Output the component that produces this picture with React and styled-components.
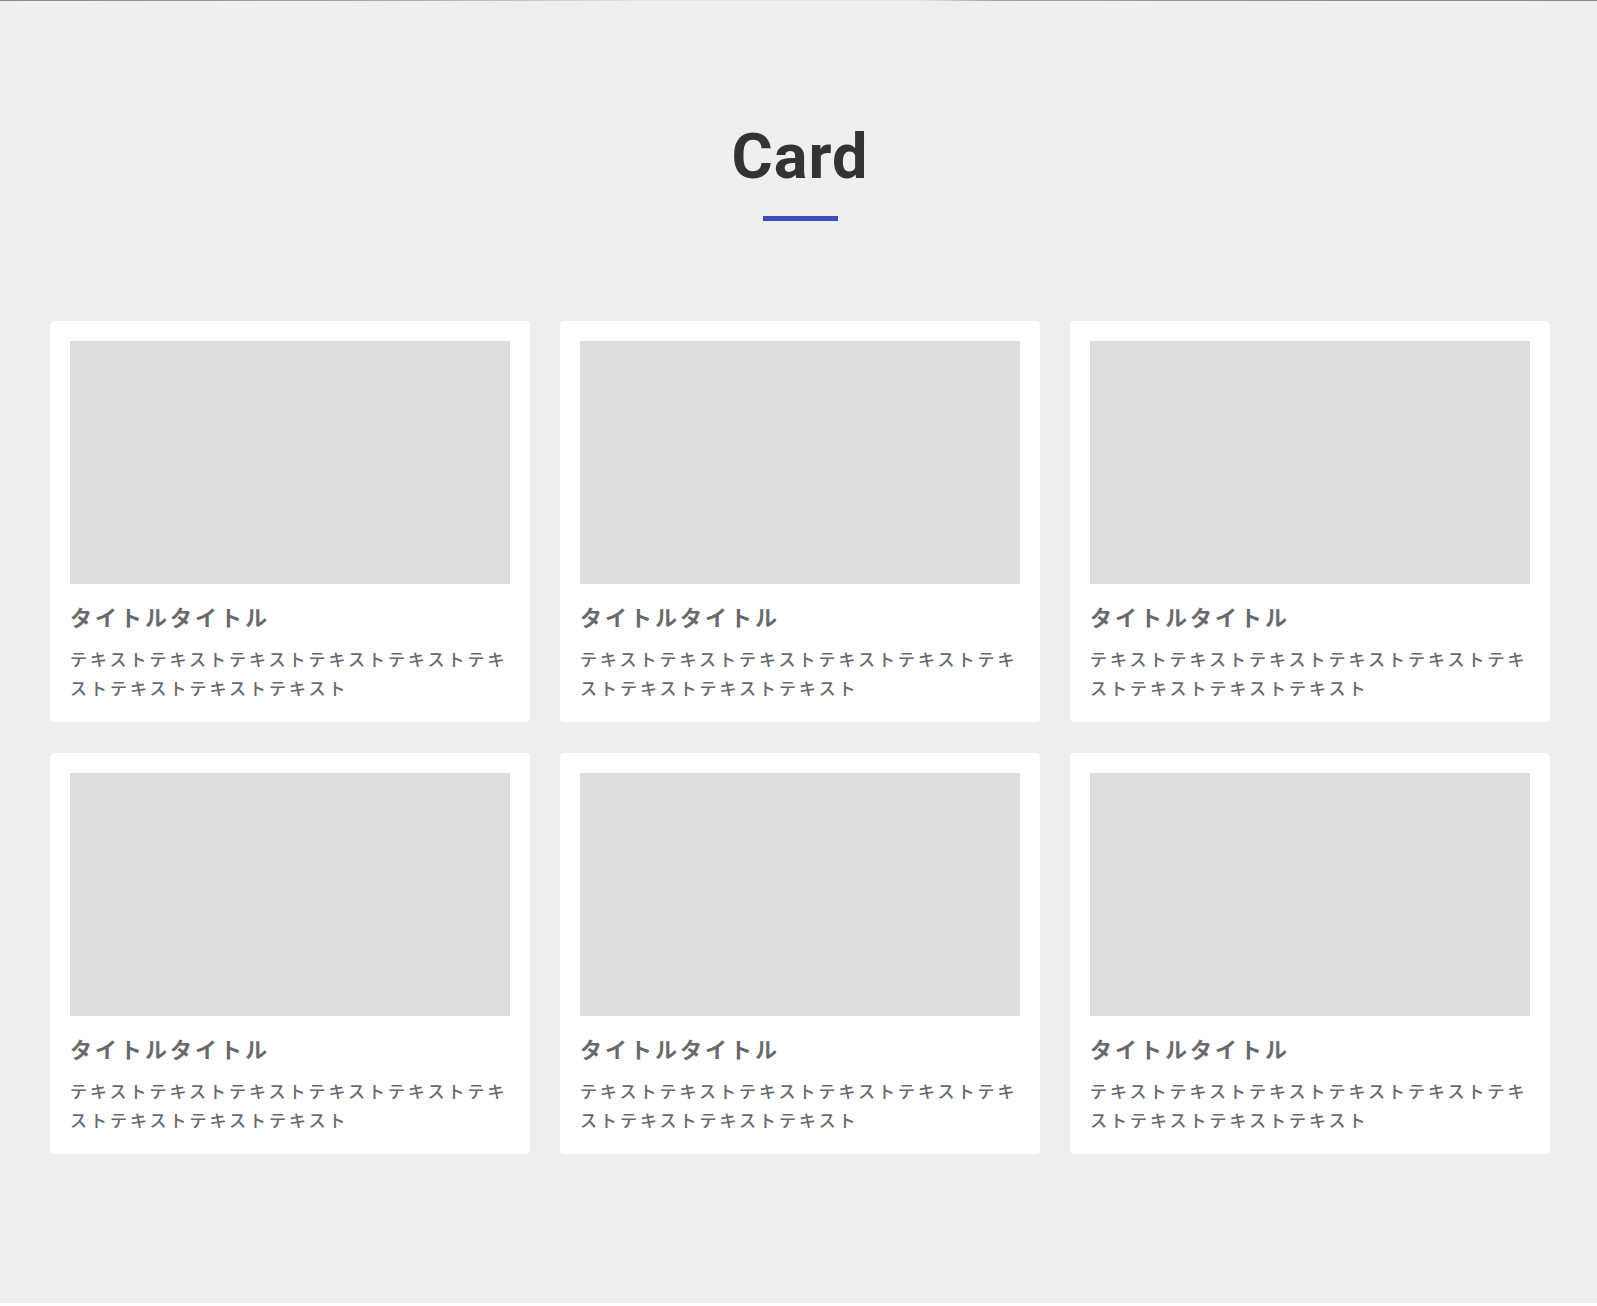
import styled, { createGlobalStyle } from 'styled-components';

const GlobalStyle = createGlobalStyle`
  html, body {
    margin: 0;
    padding: 0;
    background: #ffffff;
  }
  * {
    box-sizing: border-box;
  }
`;

const Page = styled.main`
  min-height: 1303px;
  background: #efefef;
  font-family: 'Noto Sans CJK JP', 'Noto Sans', sans-serif;
`;

const TopLine = styled.div`
  height: 1px;
  background: linear-gradient(90deg, #7f8d92 0%, #a9a6ae 25%, #dce6e8 40%, #dde4e6 58%, #a5a2aa 62%, #8a9599 80%, #7f8d92 100%);
`;

const Header = styled.header`
  display: flex;
  flex-direction: column;
  align-items: center;
  padding: 118px 47px 0 50px;
`;

const Heading = styled.h2`
  margin: 0;
  font-family: 'Roboto', 'Liberation Sans', sans-serif;
  font-size: 63px;
  font-weight: 700;
  line-height: 1.2;
  letter-spacing: 1px;
  color: #333333;
`;

const HeadingBar = styled.span`
  display: block;
  width: 75px;
  height: 5px;
  margin-top: 21px;
  background: #3f4fb8;
`;

const CardGrid = styled.section`
  display: grid;
  grid-template-columns: repeat(3, 480px);
  gap: 31px 30px;
  padding: 100px 47px 0 50px;
`;

const CardItem = styled.article`
  display: flex;
  flex-direction: column;
  padding: 20px;
  background: #ffffff;
  border-radius: 4px;
`;

const CardImage = styled.div`
  height: 243px;
  background: #dddddd;
`;

const CardTitle = styled.h3`
  margin: 16px 0 0;
  font-size: 22px;
  font-weight: 700;
  line-height: 33px;
  letter-spacing: 3px;
  color: #67696c;
`;

const CardText = styled.p`
  margin: 11px 0 0;
  font-size: 17px;
  font-weight: 500;
  line-height: 29px;
  letter-spacing: 3px;
  color: #67696c;
`;

const cards = Array.from({ length: 6 }, (_, i) => ({
  id: i,
  title: 'タイトルタイトル',
  text: 'テキスト'.repeat(9),
}));

function Card({ title, text }) {
  return (
    <CardItem>
      <CardImage />
      <CardTitle>{title}</CardTitle>
      <CardText>{text}</CardText>
    </CardItem>
  );
}

export default function App() {
  return (
    <>
      <GlobalStyle />
      <Page>
        <TopLine />
        <Header>
          <Heading>Card</Heading>
          <HeadingBar />
        </Header>
        <CardGrid>
          {cards.map((card) => (
            <Card key={card.id} title={card.title} text={card.text} />
          ))}
        </CardGrid>
      </Page>
    </>
  );
}
